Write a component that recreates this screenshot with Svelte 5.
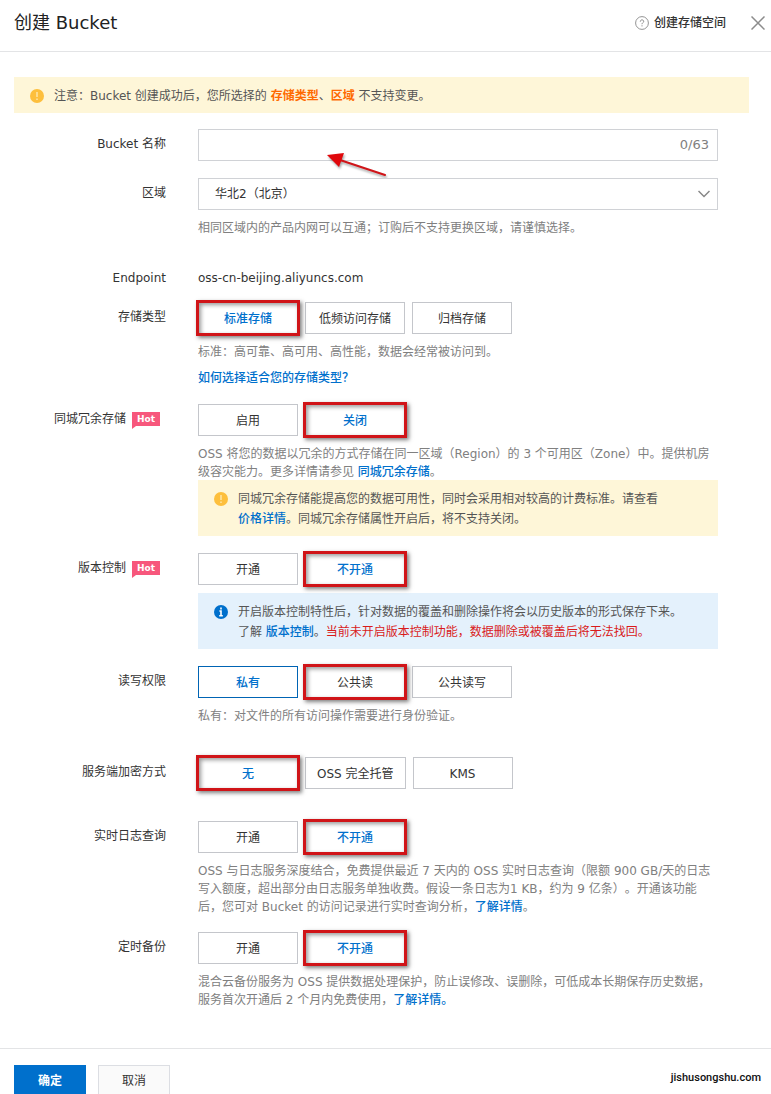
<script>
  let bucketName = $state('');
  let region = $state('cn-beijing');

  const groups = $state({
    storage: { value: '标准存储', marked: '标准存储', options: ['标准存储', '低频访问存储', '归档存储'] },
    zone: { value: '关闭', marked: '关闭', options: ['启用', '关闭'] },
    version: { value: '不开通', marked: '不开通', options: ['开通', '不开通'] },
    acl: { value: '私有', marked: '公共读', options: ['私有', '公共读', '公共读写'] },
    crypto: { value: '无', marked: '无', options: ['无', 'OSS 完全托管', 'KMS'] },
    log: { value: '不开通', marked: '不开通', options: ['开通', '不开通'] },
    backup: { value: '不开通', marked: '不开通', options: ['开通', '不开通'] }
  });
</script>

{#snippet choices(key, label)}
  <div class="choices" role="group" aria-label={label}>
    {#each groups[key].options as option (option)}
      <button
        type="button"
        class="choice"
        class:active={groups[key].value === option}
        class:marked={groups[key].marked === option}
        aria-pressed={groups[key].value === option}
        onclick={() => (groups[key].value = option)}
      >{option}</button>
    {/each}
  </div>
{/snippet}

{#snippet warnIcon()}
  <svg class="notice-icon" viewBox="0 0 14 14" aria-hidden="true">
    <circle cx="7" cy="7" r="7" fill="#fdbf3d" />
    <path d="M7 3v5M7 9.6v1.4" stroke="#fde9b0" stroke-width="1.4" />
  </svg>
{/snippet}

{#snippet hot()}
  <span class="hot">Hot</span>
{/snippet}

<div class="drawer">
  <header class="header">
    <h1>创建 Bucket</h1>
    <a class="help-link" href="#help">
      <svg viewBox="0 0 14 14" width="14" height="14" fill="none" stroke="#888" aria-hidden="true">
        <circle cx="7" cy="7" r="6.4" stroke-width="0.9" />
        <path d="M5.3 5.6c0-2.3 3.4-2.2 3.4-.2 0 1.3-1.7 1.3-1.7 2.8M7 9.3v1.1" />
      </svg>
      创建存储空间
    </a>
    <button type="button" class="close" aria-label="关闭">
      <svg viewBox="0 0 14 14" width="14" height="14" fill="none" stroke="#8c8c8c" stroke-width="1.5" aria-hidden="true">
        <path d="M.5.5l13 13M13.5.5l-13 13" />
      </svg>
    </button>
  </header>

  <main class="body">
    <div class="notice warn">
      {@render warnIcon()}
      <p>注意：Bucket 创建成功后，您所选择的 <b>存储类型</b>、<b>区域</b> 不支持变更。</p>
    </div>

    <form id="bucket-form" class="form" onsubmit={(e) => e.preventDefault()}>
      <div class="row">
        <label class="label" for="bucket-name">Bucket 名称</label>
        <div class="field text-field">
          <input id="bucket-name" type="text" maxlength="63" bind:value={bucketName} />
          <span class="count">{bucketName.length}/63</span>
          <svg class="arrow" viewBox="0 0 64 30" width="64" height="30" aria-hidden="true">
            <path d="M14 8L59 23" stroke="#d01418" stroke-width="2" stroke-linecap="round" />
            <path d="M1 3L18 1L13 15z" fill="#e0080c" />
          </svg>
        </div>
      </div>

      <div class="row">
        <label class="label" for="region">区域</label>
        <div class="field">
          <div class="select-field">
            <select id="region" bind:value={region}>
              <option value="cn-beijing">华北2（北京）</option>
            </select>
            <svg class="chevron" viewBox="0 0 12 8" width="12" height="8" fill="none" stroke="#888" stroke-width="1.5" aria-hidden="true">
              <path d="M.5 1L6 6.5L11.5 1" />
            </svg>
          </div>
          <p class="hint">相同区域内的产品内网可以互通；订购后不支持更换区域，请谨慎选择。</p>
        </div>
      </div>

      <div class="row endpoint">
        <span class="label">Endpoint</span>
        <div class="field endpoint-value">oss-cn-beijing.aliyuncs.com</div>
      </div>

      <div class="row storage">
        <span class="label">存储类型</span>
        <div class="field">
          {@render choices('storage', '存储类型')}
          <p class="hint">标准：高可靠、高可用、高性能，数据会经常被访问到。</p>
          <p class="hint"><a href="#storage-class">如何选择适合您的存储类型？</a></p>
        </div>
      </div>

      <div class="row">
        <span class="label">同城冗余存储{@render hot()}</span>
        <div class="field">
          {@render choices('zone', '同城冗余存储')}
          <p class="hint">
            OSS 将您的数据以冗余的方式存储在同一区域（Region）的 3 个可用区（Zone）中。提供机房<br />级容灾能力。更多详情请参见 <a href="#zrs">同城冗余存储</a>。
          </p>
          <div class="notice warn">
            {@render warnIcon()}
            <p>同城冗余存储能提高您的数据可用性，同时会采用相对较高的计费标准。请查看<br /><a href="#price">价格详情</a>。同城冗余存储属性开启后，将不支持关闭。</p>
          </div>
        </div>
      </div>

      <div class="row">
        <span class="label">版本控制{@render hot()}</span>
        <div class="field">
          {@render choices('version', '版本控制')}
          <div class="notice info">
            <svg class="notice-icon" viewBox="0 0 14 14" aria-hidden="true">
              <circle cx="7" cy="7" r="7" fill="#0070cc" />
              <path d="M7 2.6v2M5.4 6H7v5M5.2 10.8h3.6" stroke="#fff" stroke-width="1.6" fill="none" />
            </svg>
            <p>开启版本控制特性后，针对数据的覆盖和删除操作将会以历史版本的形式保存下来。<br />了解 <a href="#versioning">版本控制</a>。<em>当前未开启版本控制功能，数据删除或被覆盖后将无法找回。</em></p>
          </div>
        </div>
      </div>

      <div class="row acl">
        <span class="label">读写权限</span>
        <div class="field">
          {@render choices('acl', '读写权限')}
          <p class="hint">私有：对文件的所有访问操作需要进行身份验证。</p>
        </div>
      </div>

      <div class="row crypto">
        <span class="label">服务端加密方式</span>
        <div class="field">{@render choices('crypto', '服务端加密方式')}</div>
      </div>

      <div class="row">
        <span class="label">实时日志查询</span>
        <div class="field">
          {@render choices('log', '实时日志查询')}
          <p class="hint">
            OSS 与日志服务深度结合，免费提供最近 7 天内的 OSS 实时日志查询（限额 900 GB/天的日志<br />写入额度，超出部分由日志服务单独收费。假设一条日志为1 KB，约为 9 亿条）。开通该功能<br />后，您可对 Bucket 的访问记录进行实时查询分析，<a href="#log">了解详情</a>。
          </p>
        </div>
      </div>

      <div class="row">
        <span class="label">定时备份</span>
        <div class="field">
          {@render choices('backup', '定时备份')}
          <p class="hint">
            混合云备份服务为 OSS 提供数据处理保护，防止误修改、误删除，可低成本长期保存历史数据，<br />服务首次开通后 2 个月内免费使用，<a href="#backup">了解详情。</a>
          </p>
        </div>
      </div>
    </form>
  </main>

  <footer class="footer">
    <button type="submit" form="bucket-form" class="btn primary">确定</button>
    <button type="button" class="btn">取消</button>
    <span class="site">jishusongshu.com</span>
  </footer>
</div>

<style>
  :global(body) { background: #fff; }

  .drawer {
    height: 100vh;
    overflow: hidden;
    color: #333;
    font: 12px/18px "DejaVu Sans", "Noto Sans CJK SC", sans-serif;
    text-spacing-trim: space-all;
  }
  .drawer * { box-sizing: border-box; }

  button, input, select { margin: 0; color: inherit; font: inherit; }
  button { cursor: pointer; }
  p { margin: 0; }
  a { color: #0070cc; font-weight: 500; text-decoration: none; }

  .header {
    display: flex;
    align-items: center;
    height: 52px;
    padding: 0 6px 6px 14px;
    border-bottom: 1px solid #e3e4e6;
  }
  h1 { margin: 0 auto 0 0; color: #222; font-size: 18px; font-weight: 400; line-height: 24px; }
  .help-link { display: flex; align-items: center; gap: 5px; color: #333; }
  .close { display: flex; margin-left: 25px; padding: 0; border: 0; background: none; }

  .body { padding: 25px 22px 40px 14px; }

  .notice { display: flex; gap: 10px; padding: 9px 16px 7px; line-height: 20px; }
  .notice-icon { flex: none; width: 14px; height: 14px; margin-top: 3px; }
  .notice b { color: #ff6a00; font-weight: 700; }
  .notice em { color: #d91b1b; font-style: normal; }
  .warn { background: #fef6d8; color: #555; }
  .info { margin-top: 8px; background: #e4f1fc; color: #555; }

  .form { display: flex; flex-direction: column; gap: 17px; margin: 16px 31px 0 0; }
  .row { display: flex; gap: 32px; }
  .label {
    display: flex;
    flex: none;
    align-items: center;
    align-self: flex-start;
    justify-content: flex-end;
    width: 152px;
    height: 30px;
  }
  .field { flex: 1; min-width: 0; }
  .hint { margin: 9px 0 -1px; color: #808080; }

  .hot {
    position: relative;
    width: 28px;
    height: 14px;
    margin: 0 6px;
    background: #f7577c;
    color: #fff;
    font: 700 9px/14px "DejaVu Sans", sans-serif;
    text-align: center;
  }
  .hot::after {
    content: '';
    position: absolute;
    top: 100%;
    left: 0;
    border-top: 3px solid #f7577c;
    border-right: 4px solid transparent;
  }

  .text-field { position: relative; display: flex; align-items: center; height: 32px; border: 1px solid #d0d2d6; }
  .text-field input { flex: 1; min-width: 0; height: 100%; padding: 0 12px; border: 0; outline: 0; background: none; }
  .count { padding-right: 8px; color: #808080; font-size: 13px; }
  .arrow { position: absolute; top: 22px; left: 127px; overflow: visible; filter: drop-shadow(1px 2px 1px rgba(0, 0, 0, 0.35)); pointer-events: none; }

  .select-field { position: relative; }
  select { display: block; width: 100%; height: 32px; padding: 0 32px 0 16px; border: 1px solid #d0d2d6; border-radius: 0; background: #fff; appearance: none; }
  .chevron { position: absolute; top: 12px; right: 8px; pointer-events: none; }

  .endpoint { margin: 10px 0 -8px; }
  .endpoint-value { line-height: 30px; }
  .storage { margin-bottom: 1px; }
  .acl { margin-bottom: 16px; }
  .crypto { margin-bottom: 15px; }

  .choices { display: flex; gap: 7px; }
  .choice { position: relative; min-width: 100px; height: 32px; padding: 1px 11px 0; border: 1px solid #c4c6cb; background: #fff; }
  .active { border-color: #0064b4; color: #0070cc; font-weight: 500; }
  .marked { z-index: 1; }
  .marked::after {
    content: '';
    position: absolute;
    inset: -3px;
    border: 3px solid #d01418;
    box-shadow: 2px 2px 4px rgba(0, 0, 0, 0.5), inset 2px 2px 4px rgba(0, 0, 0, 0.4);
    pointer-events: none;
  }

  .footer { display: flex; align-items: flex-start; gap: 12px; padding: 16px 10px 16px 14px; border-top: 1px solid #e3e4e6; }
  .btn { width: 72px; height: 32px; padding: 0; border: 1px solid #dcdee3; background: #fafafa; }
  .primary { border-color: #0070cc; background: #0070cc; color: #fff; font-weight: 700; }
  .site { margin-left: auto; color: #111; font: 500 11px/26px Roboto, sans-serif; }
</style>
